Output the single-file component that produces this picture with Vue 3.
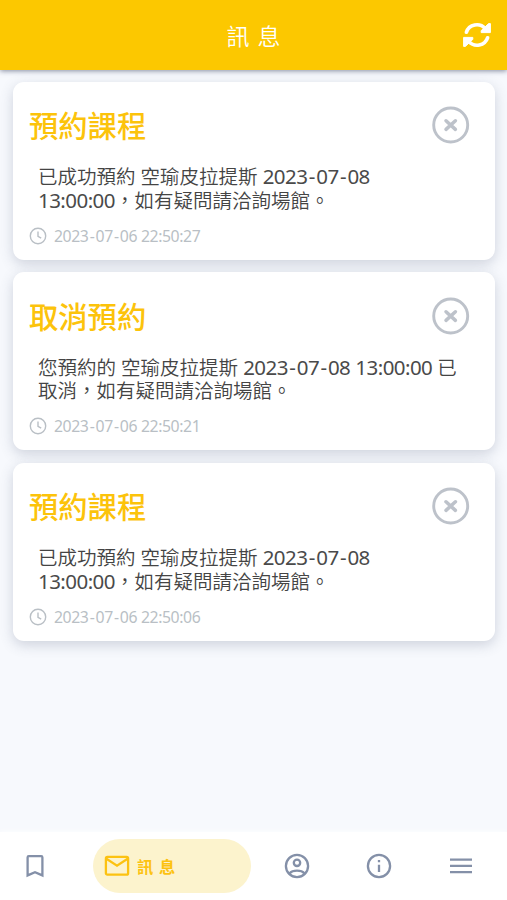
<template>
  <div class="page" lang="zh-Hant">
    <header class="top-bar">
      <h1 class="top-title">訊 息</h1>
      <button class="refresh-btn" aria-label="重新整理">
        <svg width="30" height="28" viewBox="0 0 30 28">
          <g fill="none" stroke="#fff" stroke-width="3.7" stroke-linecap="round">
            <path d="M4.4 11.2A10.9 10.5 0 0 1 23.2 7.6" />
            <path d="M25.6 16.8A10.9 10.5 0 0 1 6.8 20.4" />
          </g>
          <g fill="#fff" stroke="#fff" stroke-width="1" stroke-linejoin="round">
            <path d="M28.4 2.6V11.6H19.2V9.6L26.6 2.6Z" />
            <path d="M1.6 25.4V16.4H10.8V18.4L3.4 25.4Z" />
          </g>
        </svg>
      </button>
    </header>

    <main class="message-list">
      <article v-for="it in items" :key="it.id" class="message-card">
        <div class="card-head">
          <h2 class="card-title">{{ it.title }}</h2>
          <button class="del-btn" aria-label="刪除" @click="removeItem(it)">
            <svg width="38" height="38" viewBox="0 0 38 38" fill="none" stroke="#bdc2ca">
              <circle cx="18.7" cy="19" r="17" stroke-width="2.9" />
              <path d="M14 14.8L23.4 23.4M23.4 14.8L14 23.4" stroke-width="3.5" stroke-linecap="round" />
            </svg>
          </button>
        </div>
        <div class="card-text">
          <p v-for="(line, n) in it.lines" :key="n"><span v-for="(part, i) in split(line)" :key="i" :class="kind(part)">{{ part }}</span></p>
        </div>
        <div class="card-time">
          <svg width="18" height="18" viewBox="0 0 18 18" fill="none" stroke="#b9bfc5" stroke-width="1.4">
            <circle cx="9" cy="9" r="7.7" />
            <path d="M9 4.5V9.3L12.2 11.2" />
          </svg>
          <time><span v-for="(part, i) in split(it.time)" :key="i" :class="kind(part)">{{ part }}</span></time>
        </div>
      </article>
    </main>

    <nav class="bottom-nav">
      <button class="nav-btn" aria-label="收藏">
        <svg width="28" height="28" viewBox="0 0 28 28">
          <path d="M6.6 5.4Q6.6 4.2 7.8 4.2H20.2Q21.4 4.2 21.4 5.4V23.4L14 20.2L6.6 23.4Z" />
        </svg>
      </button>
      <button class="nav-btn active">
        <svg width="28" height="28" viewBox="0 0 28 28">
          <rect x="2.9" y="4.9" width="22.2" height="17.8" rx="1.5" />
          <path d="M3.4 6.8L14 13.6L24.6 6.8" />
        </svg>
        <span class="nav-label">訊 息</span>
      </button>
      <button class="nav-btn" aria-label="會員">
        <svg width="28" height="28" viewBox="0 0 28 28">
          <circle cx="14" cy="14" r="11.1" />
          <circle cx="14" cy="10.8" r="3.2" />
          <path d="M6.4 21.6C8.1 19.6 11 18.7 14 18.7S19.9 19.6 21.6 21.6" />
        </svg>
      </button>
      <button class="nav-btn" aria-label="資訊">
        <svg width="28" height="28" viewBox="0 0 28 28">
          <circle cx="14" cy="14" r="11.1" />
          <path d="M14 12.7V20M14 8V10.3" />
        </svg>
      </button>
      <button class="nav-btn" aria-label="選單">
        <svg width="28" height="28" viewBox="0 0 28 28">
          <path d="M3 7.7H25M3 13.9H25M3 20.1H25" />
        </svg>
      </button>
    </nav>
  </div>
</template>

<script setup>
import { ref } from 'vue'

const items = ref([
  {
    id: 1,
    title: '預約課程',
    lines: ['已成功預約 空瑜皮拉提斯 2023-07-08', '13:00:00，如有疑問請洽詢場館。'],
    time: '2023-07-06 22:50:27'
  },
  {
    id: 2,
    title: '取消預約',
    lines: ['您預約的 空瑜皮拉提斯 2023-07-08 13:00:00 已', '取消，如有疑問請洽詢場館。'],
    time: '2023-07-06 22:50:21'
  },
  {
    id: 3,
    title: '預約課程',
    lines: ['已成功預約 空瑜皮拉提斯 2023-07-08', '13:00:00，如有疑問請洽詢場館。'],
    time: '2023-07-06 22:50:06'
  }
])

// digits and dashes get their own spans, they are spaced differently from the rest
function split(text) {
  return text.split(/([\d:]+|-)/).filter(Boolean)
}

function kind(part) {
  if (part === '-') return 'num dash'
  return /^\d/.test(part) ? 'num' : ''
}

function removeItem(it) {
  items.value = items.value.filter(x => x.id !== it.id)
}
</script>

<style>
body { margin: 0; background: #f7f9fd; }
</style>

<style scoped>
.page { display: flex; flex-direction: column; height: 100vh; background: #f7f9fd; font-family: 'Noto Sans', 'Noto Sans CJK TC', sans-serif; overflow: hidden; }
button { background: transparent; border: none; padding: 0; margin: 0; font-family: inherit; cursor: pointer; }
svg { display: block; flex-shrink: 0; }

.top-bar { display: grid; grid-template-columns: 60px 1fr 60px; align-items: center; height: 69.5px; flex-shrink: 0; background: #fcc800; box-shadow: 0 1px 5px rgba(70, 80, 110, .65); z-index: 1; }
.top-title { grid-column: 2; margin: 3px 0 0; text-align: center; font-size: 23px; line-height: 30px; font-weight: 350; word-spacing: 2px; color: #fff; }
.refresh-btn { justify-self: end; margin-right: 15px; }

.message-list { flex: 1; display: flex; flex-direction: column; gap: 12.3px; padding: 12px 12px 0 13px; }
.message-card { box-sizing: border-box; height: 178.3px; padding: 24.5px 25px 0 16px; background: #fff; border-radius: 11px; box-shadow: 0 4px 13px rgba(75, 88, 115, .24); }
.card-head { display: flex; align-items: center; justify-content: space-between; height: 38px; }
.card-title { margin: 2px 0 0; font-size: 29.3px; line-height: 38px; font-weight: 500; color: #fcc30b; }
.card-text { margin: 21px 0 0 9px; font-size: 19.5px; line-height: 23.5px; font-weight: 350; color: #444; white-space: nowrap; }
.card-text p { height: 23.5px; margin: 0; }
.card-text .num { font-size: 20.5px; line-height: 1; font-weight: 400; letter-spacing: -.55px; color: #4a4a4a; }
.card-text .dash { margin: 0 1.4px; }
.card-time { display: flex; align-items: center; gap: 7px; height: 20px; margin-top: 13.5px; font-size: 15px; line-height: 20px; color: #b9bfc5; }
.card-time .num { font-size: 15.8px; line-height: 1; letter-spacing: -.42px; }
.card-time .dash { margin: 0 1.2px; }

.bottom-nav { display: grid; grid-template-columns: 70px 185.5px 82px 82px 82px; align-items: center; height: 68px; flex-shrink: 0; background: #fff; box-shadow: 0 0 6px #fff; }
.nav-btn { display: flex; align-items: center; justify-content: center; height: 54px; }
.nav-btn svg { fill: none; stroke: #8490a8; stroke-width: 2.3; }
.nav-btn.active { justify-content: flex-start; width: 158px; margin-left: 23px; padding-left: 10px; gap: 6px; background: #fcf3cd; border-radius: 27px; }
.nav-btn.active svg { stroke: #fcc211; }
.nav-label { margin-top: -1px; font-size: 16.3px; font-weight: 700; word-spacing: 1.5px; color: #fcc211; }
</style>
